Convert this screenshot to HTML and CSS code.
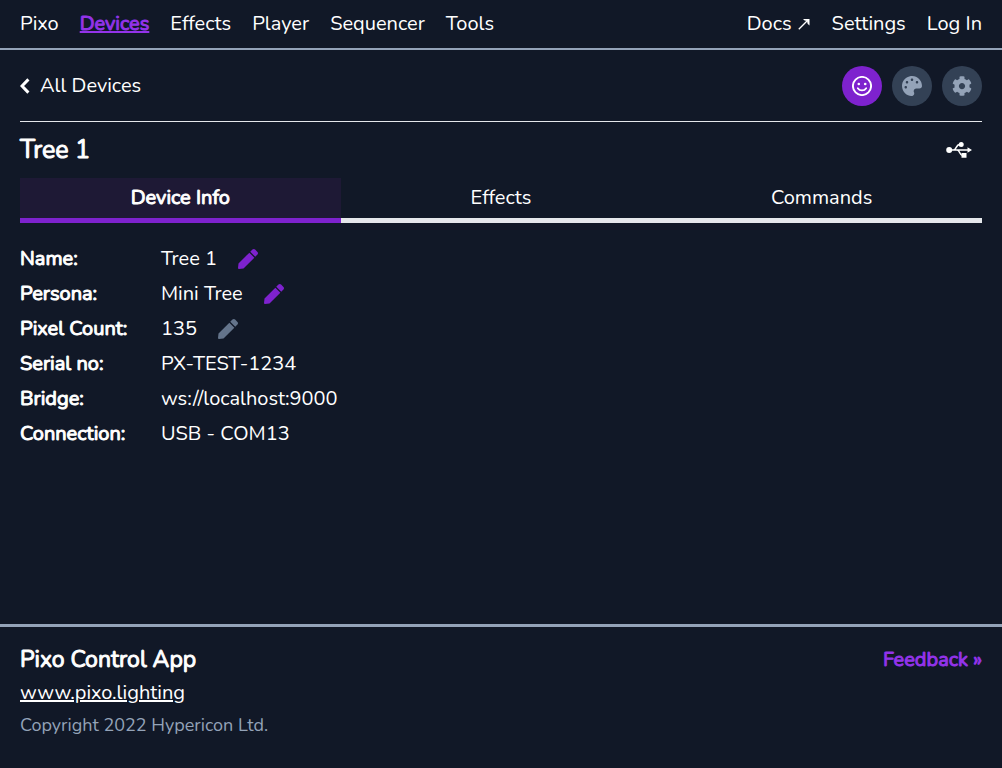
FILE: index.html
```html
<!DOCTYPE html>
<html lang="en">
<head>
<meta charset="utf-8">
<meta name="viewport" content="width=device-width, initial-scale=1">
<title>Pixo Control App</title>
<link rel="stylesheet" href="styles.css">
</head>
<body>
<header class="site-header">
  <nav class="nav" aria-label="Main">
    <a href="#">Pixo</a>
    <a href="#" class="current" aria-current="page">Devices</a>
    <a href="#">Effects</a>
    <a href="#">Player</a>
    <a href="#">Sequencer</a>
    <a href="#">Tools</a>
  </nav>
  <nav class="nav" aria-label="Account">
    <a href="#" class="docs">Docs <svg class="external" viewBox="0 0 12 12" aria-hidden="true"><path d="M.8 11.200 9 3" fill="none" stroke="currentColor" stroke-width="1.300"/><path d="M5 1h6.500v6.500L9.600 5.800 9 3 6.600 2.400z"/></svg></a>
    <a href="#">Settings</a>
    <a href="#">Log In</a>
  </nav>
</header>
<main class="main">
  <div class="toolbar">
    <a href="#" class="back"><svg class="chevron" viewBox="0 0 10 16" aria-hidden="true"><path d="M8.400 1.400 2 8l6.400 6.600" fill="none" stroke="currentColor" stroke-width="3"/></svg>All Devices</a>
    <div class="actions">
      <button class="round active" aria-label="Simple view"><svg viewBox="0 0 20 20" aria-hidden="true"><circle cx="10" cy="10" r="9.100" fill="none" stroke="currentColor" stroke-width="1.900"/><circle cx="6.800" cy="8" r="1.300"/><circle cx="13.200" cy="8" r="1.300"/><path d="M5.800 12.200c2 3 6.400 3 8.400 0" fill="none" stroke="currentColor" stroke-width="1.800" stroke-linecap="round"/></svg></button>
      <button class="round" aria-label="Palette"><svg viewBox="0 0 512 512" aria-hidden="true"><path d="M204.300 5C104.900 24.400 24.800 104.300 5.200 203.400c-37 187 131.700 326.400 258.800 306.700 41.200-6.400 61.400-54.600 42.500-91.700-23.100-45.400 9.900-98.400 60.900-98.400h79.700c35.800 0 64.800-29.600 64.900-65.300C511.500 97.100 368.100-26.900 204.300 5zM96 320c-17.700 0-32-14.300-32-32s14.300-32 32-32 32 14.300 32 32-14.300 32-32 32zm32-128c-17.700 0-32-14.300-32-32s14.300-32 32-32 32 14.300 32 32-14.300 32-32 32zm128-64c-17.700 0-32-14.300-32-32s14.300-32 32-32 32 14.300 32 32-14.300 32-32 32zm128 64c-17.700 0-32-14.300-32-32s14.300-32 32-32 32 14.300 32 32-14.300 32-32 32z"/></svg></button>
      <button class="round" aria-label="Device settings"><svg viewBox="0 0 512 512" aria-hidden="true"><path d="M487.400 315.700l-42.600-24.600c4.300-23.200 4.300-47 0-70.200l42.600-24.600c4.900-2.800 7.100-8.600 5.500-14-11.100-35.600-30-67.800-54.700-94.600-3.800-4.100-10-5.100-14.800-2.300L380.800 110c-17.900-15.400-38.500-27.300-60.800-35.100V25.800c0-5.600-3.900-10.500-9.400-11.700-36.700-8.200-74.300-7.800-109.200 0-5.500 1.200-9.400 6.100-9.400 11.700V75c-22.200 7.900-42.800 19.800-60.800 35.100L88.700 85.500c-4.900-2.800-11-1.900-14.800 2.300-24.700 26.700-43.600 58.900-54.700 94.600-1.700 5.400.6 11.200 5.500 14L67.300 221c-4.300 23.200-4.300 47 0 70.200l-42.600 24.600c-4.900 2.800-7.100 8.600-5.500 14 11.100 35.600 30 67.800 54.700 94.600 3.800 4.100 10 5.100 14.800 2.300l42.600-24.600c17.900 15.400 38.500 27.300 60.800 35.100v49.200c0 5.600 3.900 10.500 9.400 11.700 36.700 8.200 74.300 7.800 109.200 0 5.500-1.200 9.400-6.100 9.400-11.700v-49.200c22.200-7.900 42.800-19.800 60.800-35.100l42.600 24.600c4.900 2.800 11 1.900 14.800-2.300 24.700-26.700 43.600-58.900 54.700-94.600 1.500-5.500-.7-11.300-5.600-14.100zM256 336c-44.100 0-80-35.900-80-80s35.900-80 80-80 80 35.900 80 80-35.900 80-80 80z"/></svg></button>
    </div>
  </div>
  <div class="title-row">
    <h1 class="title">Tree 1</h1>
    <svg class="usb" viewBox="0 0 26 18" role="img" aria-label="USB"><circle cx="3.200" cy="9" r="3"/><circle cx="15.200" cy="3.400" r="2.500"/><path d="M15.500 12h5v4.800h-5zM21.500 6.200 26 9l-4.500 2.800z"/><path d="M3 9h19M7.500 9c3 0 2.500-5.600 6-5.600h1.500M11 9c3 0 2.500 5.600 5.500 5.600" fill="none" stroke="currentColor" stroke-width="1.500"/></svg>
  </div>
  <div class="tabs" role="tablist">
    <button class="tab selected" role="tab" aria-selected="true">Device Info</button>
    <button class="tab" role="tab" aria-selected="false">Effects</button>
    <button class="tab" role="tab" aria-selected="false">Commands</button>
  </div>
  <svg class="symbols" aria-hidden="true"><symbol id="pen" viewBox="0 0 512 512"><path d="M290.740 93.240l128.020 128.020-277.990 277.990-114.140 12.600C11.350 513.540-1.560 500.620.14 485.340l12.700-114.220 277.900-277.880zm207.200-19.060l-60.110-60.110c-18.750-18.750-49.160-18.750-67.910 0l-56.550 56.550 128.020 128.020 56.550-56.550c18.750-18.760 18.750-49.160 0-67.910z"/></symbol></svg>
  <dl class="info">
    <dt>Name:</dt><dd>Tree 1 <button class="edit" aria-label="Edit name"><svg><use href="#pen"/></svg></button></dd>
    <dt>Persona:</dt><dd>Mini Tree <button class="edit" aria-label="Edit persona"><svg><use href="#pen"/></svg></button></dd>
    <dt>Pixel Count:</dt><dd>135 <button class="edit" aria-label="Edit pixel count" disabled><svg><use href="#pen"/></svg></button></dd>
    <dt>Serial no:</dt><dd>PX-TEST-1234</dd>
    <dt>Bridge:</dt><dd>ws://localhost:9000</dd>
    <dt>Connection:</dt><dd>USB - COM13</dd>
  </dl>
</main>
<footer class="footer">
  <div class="about">
    <h2 class="app-name">Pixo Control App</h2>
    <a href="#" class="site-link">www.pixo.lighting</a>
    <p class="copyright">Copyright 2022 Hypericon Ltd.</p>
  </div>
  <a href="#" class="feedback">Feedback »</a>
</footer>
</body>
</html>
```
FILE: styles.css
```css
* { box-sizing: border-box; }
body {
  margin: 0;
  min-height: 100vh;
  display: flex;
  flex-direction: column;
  background: #111827;
  color: #fff;
  font: 20px/30px Nunito, "Open Sans", sans-serif;
}
a { color: inherit; text-decoration: none; }
button { font: inherit; color: inherit; border: 0; padding: 0; background: none; cursor: pointer; }
svg { fill: currentColor; }
h1, h2, p, dl, dd { margin: 0; }
.nav .current, .title, .tab.selected, .info dt, .app-name, .feedback {
  font-weight: 400;
  -webkit-text-stroke: 1px currentColor;
}
.site-header {
  display: flex;
  justify-content: space-between;
  padding: 9px 20px;
  border-bottom: 2px solid #94a3b8;
}
.nav { display: flex; gap: 21px; }
.nav .current { color: #9333ea; text-decoration: underline; }
.docs { display: flex; align-items: center; gap: 6px; padding-right: 1px; }
.external { width: 12px; height: 12px; }
.main { flex: 1; padding: 0 20px; }
.toolbar {
  display: flex;
  justify-content: space-between;
  align-items: center;
  padding: 16px 0 15px;
  border-bottom: 1px solid #e5e7eb;
}
.back { display: flex; align-items: center; gap: 10px; }
.chevron { width: 10px; height: 16px; }
.actions { display: flex; gap: 10px; }
.round {
  display: grid;
  place-items: center;
  width: 40px;
  height: 40px;
  border-radius: 50%;
  background: #334155;
  color: #94a3b8;
}
.round svg { width: 20px; height: 20px; }
.round.active { background: #7e22ce; color: #fff; }
.title-row { display: flex; justify-content: space-between; align-items: center; padding: 10px 10px 10px 0; }
.title { font-size: 25px; line-height: 36px; }
.usb { width: 26px; height: 18px; }
.tabs { display: grid; grid-template-columns: repeat(3, 1fr); }
.tab { padding: 5px 0; border-bottom: 5px solid #e5e7eb; }
.tab.selected { background: #1e1935; border-color: #7e22ce; }
.symbols { display: none; }
.info { display: grid; grid-template-columns: 141px 1fr; grid-auto-rows: 35px; align-items: center; padding-top: 18px; }
.info dd { display: flex; align-items: center; gap: 21px; }
.edit { display: flex; color: #7e22ce; }
.edit:disabled { color: #64748b; }
.edit svg { width: 20px; height: 20px; }
.footer {
  display: flex;
  justify-content: space-between;
  align-items: flex-start;
  padding: 18px 20px 28px;
  border-top: 3px solid #94a3b8;
}
.app-name { font-size: 23px; line-height: 30px; }
.site-link { display: block; line-height: 35px; text-decoration: underline; }
.copyright { font-size: 18px; color: #94a3b8; }
.feedback { color: #9333ea; }
```
